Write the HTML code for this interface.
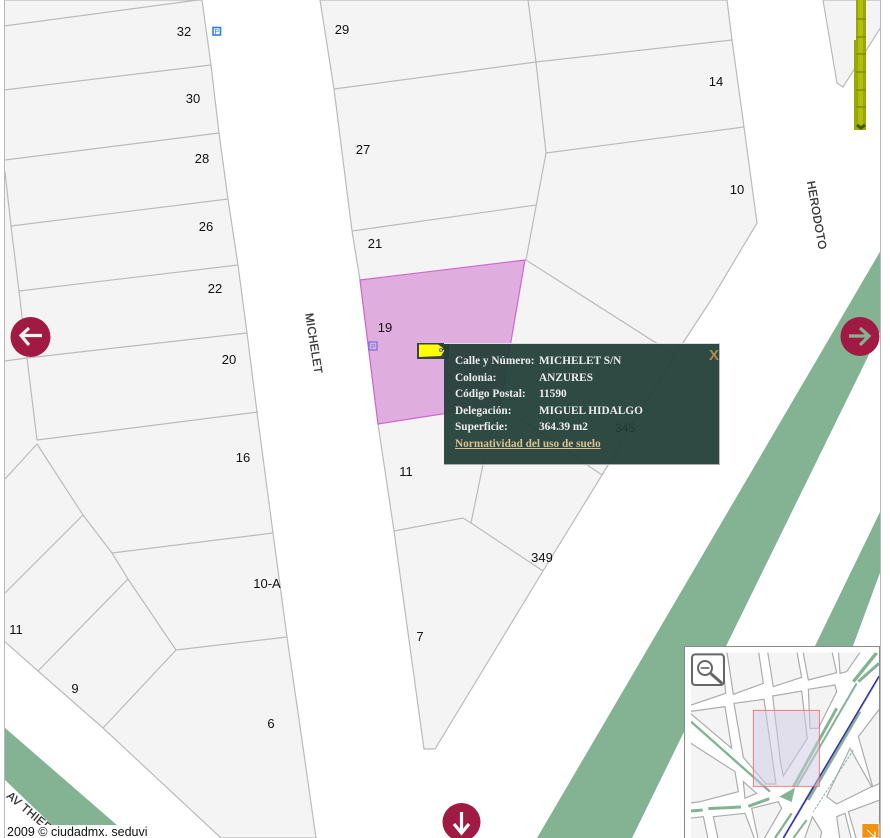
<!DOCTYPE html>
<html><head><meta charset="utf-8">
<style>
html,body{margin:0;padding:0;background:#fff;width:890px;height:838px;overflow:hidden}
svg{position:absolute;left:0;top:0}
.n{font:13px "Liberation Sans",Arial,sans-serif;fill:#111;text-anchor:middle}
.s{font:11.5px "Liberation Sans",Arial,sans-serif;fill:#333;text-anchor:middle;stroke:#333;stroke-width:.3;letter-spacing:.4px}
#pop{position:absolute;left:444px;top:343px;width:276px;height:122px;background:rgba(36,63,57,.95);border-top:1px solid #ddd;border-right:1px solid #bbb;border-bottom:1px solid #aaa;box-sizing:border-box;font:bold 11.3px "Liberation Serif",serif;color:#eee}
#pop div{position:absolute;white-space:nowrap;line-height:12px}
#pop a{color:#dcc08e;text-decoration:underline}
#copy{position:absolute;left:5px;top:825px;width:150px;height:13px;background:#fff;font:12.5px/15px "Liberation Sans",Arial,sans-serif;color:#111;padding-left:2px;box-sizing:border-box;overflow:hidden;white-space:nowrap}
</style></head><body>
<svg width="890" height="838" viewBox="0 0 890 838" xmlns="http://www.w3.org/2000/svg">
<defs><clipPath id="m"><rect x="5" y="0" width="875" height="838"/></clipPath>
<clipPath id="ov"><rect x="33" y="38" width="564" height="556"/></clipPath></defs>
<g clip-path="url(#m)">
<g fill="#84b394">
<polygon points="881,250 537,838 632,838 881,330"/>
<polygon points="881,510 881,570 853,646 815,646"/>
<polygon points="4,727 4,779 53,826 118,826"/>
</g>
<g fill="#f4f4f4" stroke="#bbb" stroke-width="1.2">
<polygon points="4,0 202,0 211,65 219,133 228,199 238,265 247,333 258,420 273,533 287,637 302,740 316,838 221,838 103,728 38,671 4,641"/>
<polygon points="320,0 334,89 352,231 360,280 378,424 394,531 424,749 435,749 543,571 602,475 675,355 711,300 757,223 744,127 732,40 727,0"/>
<polygon points="823,0 837,83 843,87 881,27 881,0"/>
</g>
<g fill="none" stroke="#bbb" stroke-width="1.2">
<path d="M4,26L198,0M4,90L211,65M5,160L219,133M11,226L228,199M19,291L238,265M27,358L247,333M5,361L27,358M37,440L258,412M5,172L11,226L19,291L27,358L37,440"/>
<path d="M37,444L83,515L112,553L128,579L176,650M5,479L37,444M5,593L83,515M38,671L128,579M103,728L176,650M112,553L273,533M176,650L287,637"/>
<path d="M334,89L536,62L732,40M528,0L536,62L546,153L526,260M546,153L744,127M352,231L536,205"/>
<path d="M526,260L675,355M394,531L463,518L471,523L543,571M471,523L486,450L500,405L602,475"/>
</g>
<polygon points="360,280 525,260 500,405 378,424" fill="#dfaedf" stroke="#cf66cf" stroke-width="1.2"/>
<g fill="#98a900">
<rect x="856" y="0" width="10" height="130"/><rect x="854" y="40" width="12" height="90"/>
</g>
<g fill="#aebc14"><rect x="858" y="0" width="5" height="127"/></g>
<path d="M856,19H866M856,37H866M856,54H866M856,72H866M856,90H866M856,107H866" stroke="#6f7d00" stroke-width="1"/>
<path d="M857,125L861,128L865,125" stroke="#4d5500" stroke-width="3" fill="none"/>
<g class="n">
<text class="n" x="184" y="36">32</text><text class="n" x="342" y="34">29</text><text class="n" x="716" y="86">14</text>
<text class="n" x="193" y="103">30</text><text class="n" x="363" y="154">27</text><text class="n" x="737" y="194">10</text>
<text class="n" x="202" y="163">28</text><text class="n" x="206" y="231">26</text><text class="n" x="375" y="248">21</text>
<text class="n" x="215" y="293">22</text><text class="n" x="385" y="332">19</text><text class="n" x="229" y="364">20</text>
<text class="n" x="243" y="462">16</text><text class="n" x="406" y="476">11</text><text class="n" x="542" y="562">349</text>
<text class="n" x="267" y="588">10-A</text><text class="n" x="420" y="641">7</text><text class="n" x="16" y="634">11</text>
<text class="n" x="75" y="693">9</text><text class="n" x="271" y="728">6</text>
</g>
<text class="s" transform="translate(310,344) rotate(81)">MICHELET</text>
<text class="s" transform="translate(813,216) rotate(80)">HERODOTO</text>
<text class="s" transform="translate(6,797) rotate(40)" style="text-anchor:start">AV THIERS</text>
<g fill="#fff" stroke="#2a7fe0" stroke-width="1.6"><rect x="213" y="27.5" width="7.5" height="7.5"/></g>
<text x="214.5" y="34" font-family="Liberation Sans" font-size="7" fill="#2a7fe0">P</text>
<g fill="none" stroke="#7070dd" stroke-width="1.2"><rect x="369" y="342" width="8" height="8"/></g>
<text x="371" y="349" font-family="Liberation Sans" font-size="7" fill="#7070dd">P</text>
<rect x="417" y="343" width="32" height="16" fill="#39423f"/>
<polygon points="419,344.500 438,344.500 445,349.500 441,356 419,357" fill="#ffff00"/>
<circle cx="441" cy="350" r="1.800" fill="#bbb" stroke="#555" stroke-width=".6"/>
<path d="M442,350L448,346" stroke="#111" stroke-width="1"/>
<g>
<circle cx="30.500" cy="337" r="20" fill="#a01a44"/>
<path d="M42,335.500H22M29,328L21,335.500L29,345" fill="none" stroke="#f4f4f4" stroke-width="3.200"/>
<circle cx="860" cy="336.500" r="19.500" fill="#a01a44"/>
<path d="M849,336H869M860,328L869,336L860,345" fill="none" stroke="#84b394" stroke-width="3.200"/>
<circle cx="461.500" cy="822" r="19" fill="#a01a44"/>
<path d="M461.500,812V832M454,824L461.500,833L469,824" fill="none" stroke="#fff" stroke-width="3.200"/>
</g>
</g>
<rect x="4" y="0" width="1" height="838" fill="#b8b8b8"/>
<rect x="880" y="0" width="1" height="838" fill="#b8b8b8"/>
<rect x="684.500" y="646.500" width="195" height="192" fill="#fff" stroke="#8a8a8a" stroke-width="1"/>
<g transform="translate(680,640) scale(.33333)">
<g clip-path="url(#ov)">
<g fill="#f4f4f4" stroke="#aaa" stroke-width="3.500">
<polygon points="140,30 235,30 250,130 160,163"/>
<polygon points="262,30 350,30 365,112 280,140"/>
<polygon points="368,30 455,30 470,98 385,120"/>
<polygon points="475,30 545,30 500,95 480,100"/>
<polygon points="25,30 125,30 137,160 25,198"/>
<polygon points="25,215 135,200 155,325"/>
<polygon points="162,190 252,178 288,432 258,432 190,352"/>
<polygon points="278,168 365,153 382,295 310,408 302,370"/>
<polygon points="385,148 465,135 470,155 415,265 390,265"/>
<polygon points="25,305 165,395 175,455 60,485 25,490"/>
<polygon points="190,425 230,460 195,475"/>
<polygon points="25,535 70,530 85,600 25,600"/>
<polygon points="100,530 195,520 225,600 115,600"/>
<polygon points="215,505 295,485 305,505 250,600 235,600"/>
<polygon points="535,290 600,205 600,430 578,440"/>
<polygon points="510,325 575,440 470,492 440,470"/>
<polygon points="505,515 600,480 600,600 530,600"/>
<polygon points="470,530 495,520 515,600 480,600"/>
<polygon points="397,530 425,575 420,600 372,600"/>
</g>
<g fill="none" stroke="#84b394">
<path d="M33,245L270,455" stroke-width="7"/>
<path d="M33,513L68,510M85,506L183,501M205,499L268,476" stroke-width="9"/>
<path d="M590,38L520,125" stroke-width="10"/>
<path d="M597,70L535,125" stroke-width="9"/>
<path d="M530,130L350,440" stroke-width="6"/>
<path d="M470,205L340,440" stroke-width="9"/>
<path d="M540,215L385,480" stroke-width="8"/>
<path d="M400,440L345,535" stroke-width="6"/>
<path d="M335,520L285,594" stroke-width="7"/>
<path d="M380,540L340,594" stroke-width="6"/>
<path d="M520,330L400,515" stroke-width="3" stroke-dasharray="8 4"/>
</g>
<polygon points="298,470 345,443 335,486" fill="#84b394"/>
<path d="M597,110L310,594" stroke="#8a8a8a" stroke-width="6" fill="none"/>
<path d="M597,108L310,594" stroke="#1a1ae0" stroke-width="3" fill="none"/>
<rect x="220" y="211" width="198" height="228" fill="#cfcbe4" fill-opacity=".52" stroke="#f56565" stroke-width="2.500"/>
</g>
<rect x="36" y="43" width="96" height="92" rx="10" fill="#fff" fill-opacity=".85" stroke="#666" stroke-width="6"/>
<circle cx="75" cy="84" r="21" fill="none" stroke="#666" stroke-width="6"/>
<path d="M62,84H88" stroke="#666" stroke-width="5"/>
<path d="M92,100L126,130" stroke="#666" stroke-width="9"/>
<rect x="546" y="551" width="51" height="43" fill="#f2930f" stroke="#fff" stroke-width="2"/>
<path d="M562,570L585,592M585,575V592H568" fill="none" stroke="#fff" stroke-width="3"/>
</g>
</svg>
<div id="pop">
<div style="left:11px;top:11px">Calle y Número:</div><div style="left:95px;top:11px">MICHELET S/N</div>
<div style="left:11px;top:28px">Colonia:</div><div style="left:95px;top:28px">ANZURES</div>
<div style="left:11px;top:44px">Código Postal:</div><div style="left:95px;top:44px">11590</div>
<div style="left:11px;top:61px">Delegación:</div><div style="left:95px;top:61px">MIGUEL HIDALGO</div>
<div style="left:11px;top:77px">Superficie:</div><div style="left:95px;top:77px">364.39 m2</div>
<div style="left:11px;top:94px"><a>Normatividad del uso de suelo</a></div>
<div style="left:171px;top:77px;font:12px 'Liberation Sans',sans-serif;color:#1f3a33;font-weight:normal">345</div>
<div style="left:265px;top:3px;font:bold 15px 'Liberation Sans',sans-serif;color:#b08c4c">X</div>
</div>
<div id="copy">2009 © ciudadmx. seduvi</div>
</body></html>
